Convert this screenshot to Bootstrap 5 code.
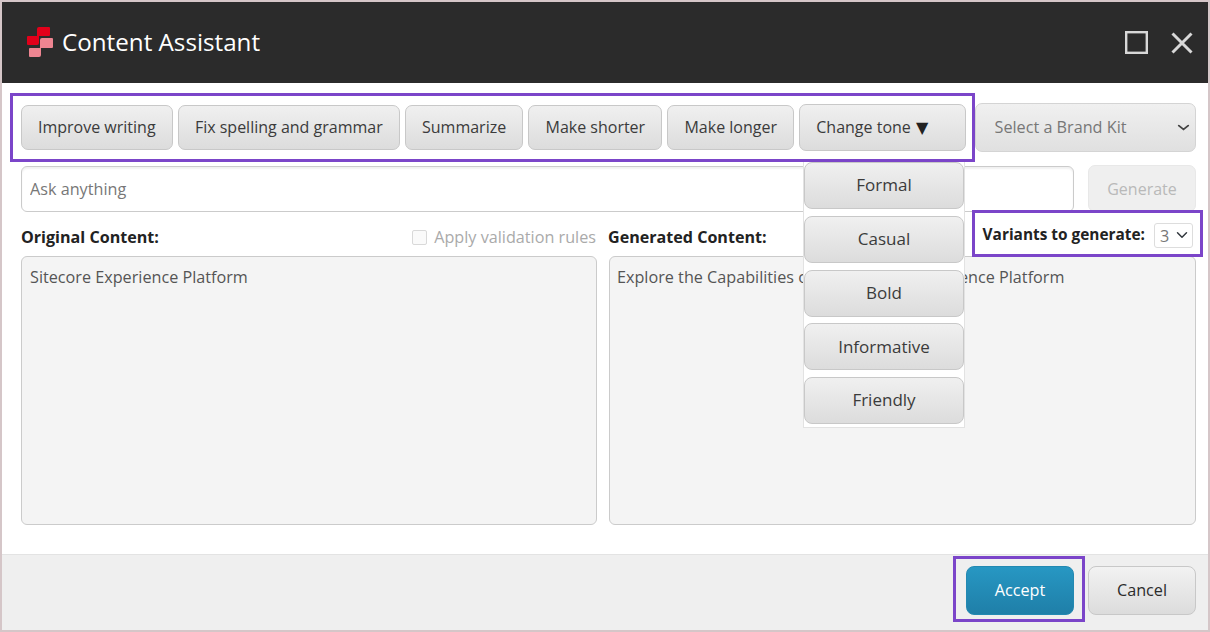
<!DOCTYPE html>
<html lang="en">
<head>
  <meta charset="UTF-8" />
  <meta name="viewport" content="width=device-width, initial-scale=1" />
  <title>Content Assistant</title>
  <link href="https://cdn.jsdelivr.net/npm/bootstrap@5.3.3/dist/css/bootstrap.min.css" rel="stylesheet">
  <style>
    html, body { height: 100%; }
    body {
      font-family: "Open Sans", sans-serif;
      font-size: 16.2px;
      background: #fff;
      overflow: hidden;
    }

    .dlg {
      position: relative;
      height: 632px;
      border: 2px solid #d5c6c8;
      display: flex;
      flex-direction: column;
    }

    .dlg-head {
      height: 81px;
      background: #2b2b2b;
      color: #fff;
      padding: 0 15px 0 25px;
    }
    .dlg-title { font-size: 24.2px; margin-left: 9px; padding-bottom: 1px; }
    .head-icons { gap: 23px; }

    .dlg-main { flex: 1; padding: 20px 12px 0 19px; }

    .tool-btn {
      --bs-btn-font-size: 16px;
      height: 45px;
      padding: 0 16px 2px;
      color: #3b3b3b;
      background: linear-gradient(#f0f0f0, #dcdcdc);
      border: 1px solid #c8c8c8;
      border-radius: 7px;
      white-space: nowrap;
    }
    .tool-btn:hover { color: #3b3b3b; background: linear-gradient(#f0f0f0, #dcdcdc); border-color: #c8c8c8; }
    .tool-row { gap: 5.3px; height: 49px; }
    .tone-open { width: 167px; height: 47px; text-align: left; flex-shrink: 0; }
    .tone-arrow { font-family: "DejaVu Sans", sans-serif; font-size: 16px; line-height: 1; color: #222; margin-left: 1px; }
    .brand-pick {
      width: 221px;
      height: 49px;
      margin-left: 3px;
      font-size: 16.2px;
      color: #777;
      padding: 0 0 0 19px;
      flex-shrink: 0;
      border: 1px solid #d4d4d4;
      border-radius: 7px;
      background-image: url("data:image/svg+xml,%3csvg xmlns='http://www.w3.org/2000/svg' viewBox='0 0 16 16'%3e%3cpath fill='none' stroke='%23444' stroke-linecap='round' stroke-width='2' d='m3 6 5 4 5-4'/%3e%3c/svg%3e"), linear-gradient(#f0f0f0, #e0e0e0);
      background-size: 15px 15px, 100% 100%;
      background-position: right 4px center, 0 0;
      background-repeat: no-repeat;
    }

    .ask-row { margin-top: 14px; gap: 14px; }
    .ask-input {
      height: 46px;
      font-size: 16.2px;
      color: #666;
      padding-left: 8px;
      border: 1px solid #cbcbcb;
      border-radius: 6px;
      box-shadow: inset 0 2px 2px #f1f1f1;
    }
    .ask-input::placeholder { color: #777; }
    .gen-btn {
      width: 108px;
      height: 47px;
      margin-top: -1px;
      font-size: 16px;
      color: #b9b9b9;
      background: #efefef;
      border: 1px solid #e8e8e8;
      border-radius: 7px;
    }
    .gen-btn:disabled { color: #b9b9b9; background: #efefef; border-color: #e8e8e8; opacity: 1; }

    .panes { margin-top: 9px; gap: 12px; }
    .pane-left { width: 576px; }
    .pane-right { width: 587px; }
    .pane-top { height: 35px; padding-bottom: 2px; }
    .pane-label { font-weight: 700; font-size: 16.1px; color: #222; }
    .gen-label { margin-left: -1px; }
    .pane-box {
      height: 269px;
      padding: 8px;
      background: #f4f4f4;
      border: 1px solid #cbcbcb;
      border-radius: 6px;
      color: #555;
      line-height: 24px;
      white-space: nowrap;
    }
    .pane-right .pane-box { padding-left: 7px; }
    .valid-check { color: #aaa; margin-right: 1px; }
    .valid-check span { margin-left: 7px; }
    .fake-box {
      width: 15px;
      height: 15px;
      border: 1px solid #d9d9d9;
      border-radius: 2px;
      background: #fafafa;
    }
    .variants { font-weight: 700; font-size: 15.4px; color: #222; gap: 9px; margin: 0 3px 5px 0; }
    .var-pick {
      width: 39px;
      height: 25px;
      font-size: 16.2px;
      font-weight: 400;
      color: #777;
      padding: 0 0 0 5px;
      border: 1px solid #ddd;
      border-radius: 3px;
      background-size: 12px 12px;
      background-position: right 4px center;
    }

    .dlg-foot {
      height: 76px;
      background: #efefef;
      border-top: 1px solid #e3e3e3;
      padding: 11px 12px 0 0;
      gap: 14px;
    }
    .foot-btn {
      width: 108px;
      height: 49px;
      padding: 0 0 1px;
      font-size: 16.2px;
      border-radius: 8px;
    }
    .accept-btn {
      color: #fff;
      background: linear-gradient(#2797c3, #1f7fa8);
      border: 1px solid #2389b2;
    }
    .accept-btn:hover { color: #fff; background: linear-gradient(#2797c3, #1f7fa8); }
    .cancel-btn {
      color: #2b2b2b;
      background: linear-gradient(#f2f2f2, #dcdcdc);
      border: 1px solid #c8c8c8;
    }
    .cancel-btn:hover { color: #2b2b2b; background: linear-gradient(#f2f2f2, #dcdcdc); border-color: #c8c8c8; }

    /* open tone menu */
    .tone-menu {
      position: absolute;
      left: 801px;
      top: 160px;
      width: 162px;
      height: 266px;
      background: #fff;
      border: 1px solid #e2e2e2;
      border-top: 0;
      gap: 6.8px;
    }
    .tone-btn {
      height: 47px;
      flex-shrink: 0;
      color: #3b3b3b;
      font-size: 17px;
      padding: 0 0 1px;
      background: linear-gradient(#f0f0f0, #dcdcdc);
      border: 1px solid #c8c8c8;
      border-radius: 8px;
    }
    .tone-btn:hover { color: #3b3b3b; background: linear-gradient(#f0f0f0, #dcdcdc); border-color: #c8c8c8; }

    /* callout frames drawn over the screenshot */
    .callout { position: absolute; border: 3px solid #7b45c9; pointer-events: none; }
    .call-a { left: 8px; top: 91px; width: 965px; height: 69px; }
    .call-b { left: 970px; top: 208px; width: 231px; height: 47px; }
    .call-c { left: 951px; top: 554px; width: 132px; height: 66px; }
  </style>
</head>
<body>
  <div class="dlg">
    <div class="dlg-head d-flex align-items-center justify-content-between">
      <div class="d-flex align-items-center">
        <svg width="26" height="32" viewBox="0 0 26 32">
          <path fill="#e2001a" d="M12 1h10a1 1 0 0 1 1 1v7a1 1 0 0 1-1 1H12v7a2 2 0 0 1-2 2H1a1 1 0 0 1-1-1V11a1 1 0 0 1 1-1h9V3a2 2 0 0 1 2-2z"/>
          <path fill="#ee8591" d="M15 12h10a1 1 0 0 1 1 1v8a1 1 0 0 1-1 1H14v7a2 2 0 0 1-2 2H3a1 1 0 0 1-1-1v-7a1 1 0 0 1 1-1h10v-8a2 2 0 0 1 2-2z"/>
        </svg>
        <span class="dlg-title">Content Assistant</span>
      </div>
      <div class="head-icons d-flex align-items-center">
        <svg width="23" height="23" viewBox="0 0 23 23"><rect x="1.2" y="1.2" width="20.6" height="20.6" fill="none" stroke="#d8d8d8" stroke-width="2.4"/></svg>
        <svg width="22" height="22" viewBox="0 0 22 22"><path d="M1.5 1.5l19 19M20.5 1.5l-19 19" fill="none" stroke="#d8d8d8" stroke-width="3"/></svg>
      </div>
    </div>

    <div class="dlg-main">
      <div class="tool-row d-flex align-items-center">
        <button class="btn tool-btn">Improve writing</button>
        <button class="btn tool-btn">Fix spelling and grammar</button>
        <button class="btn tool-btn">Summarize</button>
        <button class="btn tool-btn">Make shorter</button>
        <button class="btn tool-btn">Make longer</button>
        <button class="btn tool-btn tone-open">Change tone <span class="tone-arrow">▼</span></button>
        <select class="form-select brand-pick"><option>Select a Brand Kit</option></select>
      </div>

      <div class="ask-row d-flex align-items-start">
        <input type="text" class="form-control ask-input" placeholder="Ask anything">
        <button class="btn gen-btn flex-shrink-0" disabled>Generate</button>
      </div>

      <div class="panes d-flex">
        <div class="pane-left">
          <div class="pane-top d-flex align-items-center justify-content-between">
            <span class="pane-label">Original Content:</span>
            <span class="valid-check d-flex align-items-center"><i class="fake-box"></i><span>Apply validation rules</span></span>
          </div>
          <div class="pane-box">Sitecore Experience Platform</div>
        </div>
        <div class="pane-right">
          <div class="pane-top d-flex align-items-center justify-content-between">
            <span class="pane-label gen-label">Generated Content:</span>
            <span class="variants d-flex align-items-center">Variants to generate:
              <select class="form-select var-pick"><option>3</option></select>
            </span>
          </div>
          <div class="pane-box">Explore the Capabilities of the Sitecore Experience Platform</div>
        </div>
      </div>
    </div>

    <div class="dlg-foot d-flex justify-content-end align-items-start">
      <button class="btn foot-btn accept-btn">Accept</button>
      <button class="btn foot-btn cancel-btn">Cancel</button>
    </div>

    <div class="tone-menu d-flex flex-column">
      <button class="btn tone-btn">Formal</button>
      <button class="btn tone-btn">Casual</button>
      <button class="btn tone-btn">Bold</button>
      <button class="btn tone-btn">Informative</button>
      <button class="btn tone-btn">Friendly</button>
    </div>

    <div class="callout call-a"></div>
    <div class="callout call-b"></div>
    <div class="callout call-c"></div>
  </div>
  <script src="https://cdn.jsdelivr.net/npm/bootstrap@5.3.3/dist/js/bootstrap.bundle.min.js"></script>
</body>
</html>
